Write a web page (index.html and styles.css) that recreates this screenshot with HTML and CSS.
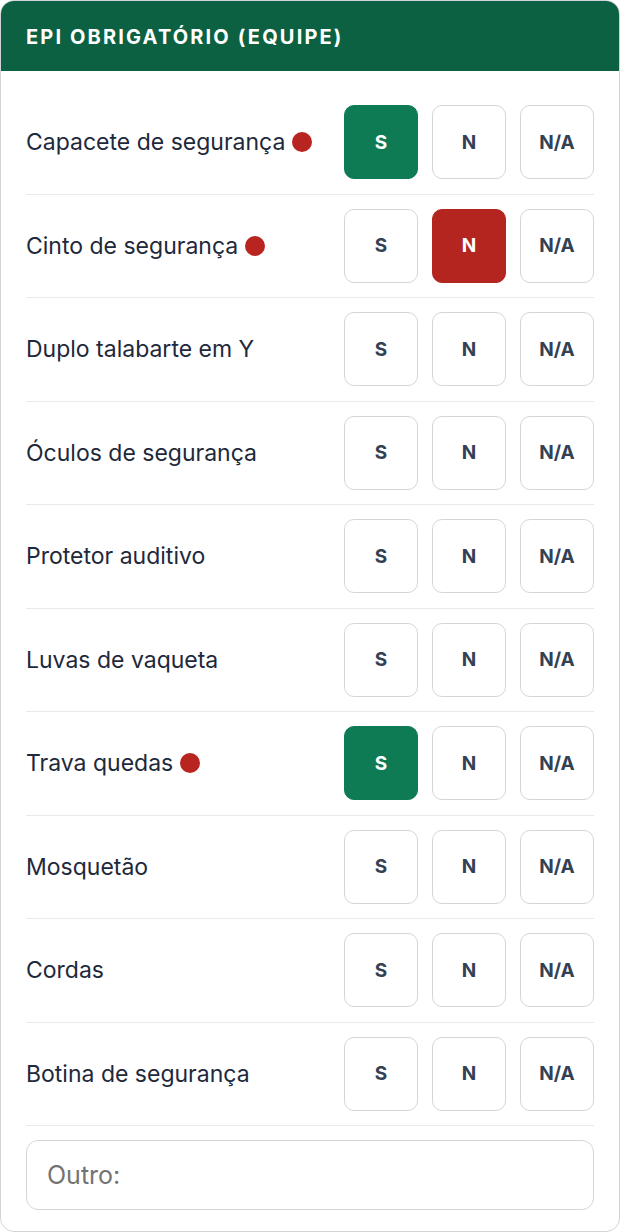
FILE: index.html
```html
<!DOCTYPE html>
<html lang="pt">
<head>
<meta charset="utf-8">
<link rel="stylesheet" href="styles.css">
</head>
<body>
<div class="card">
  <div class="card-header">EPI OBRIGATÓRIO (EQUIPE)</div>
  <div class="card-body">
    <div class="row"><span class="label">Capacete de segurança <span class="dot"></span></span><div class="opts"><button class="opt sel-s">S</button><button class="opt">N</button><button class="opt">N/A</button></div></div>
    <div class="row"><span class="label">Cinto de segurança <span class="dot"></span></span><div class="opts"><button class="opt">S</button><button class="opt sel-n">N</button><button class="opt">N/A</button></div></div>
    <div class="row"><span class="label">Duplo talabarte em Y</span><div class="opts"><button class="opt">S</button><button class="opt">N</button><button class="opt">N/A</button></div></div>
    <div class="row"><span class="label">Óculos de segurança</span><div class="opts"><button class="opt">S</button><button class="opt">N</button><button class="opt">N/A</button></div></div>
    <div class="row"><span class="label">Protetor auditivo</span><div class="opts"><button class="opt">S</button><button class="opt">N</button><button class="opt">N/A</button></div></div>
    <div class="row"><span class="label">Luvas de vaqueta</span><div class="opts"><button class="opt">S</button><button class="opt">N</button><button class="opt">N/A</button></div></div>
    <div class="row"><span class="label">Trava quedas <span class="dot"></span></span><div class="opts"><button class="opt sel-s">S</button><button class="opt">N</button><button class="opt">N/A</button></div></div>
    <div class="row"><span class="label">Mosquetão</span><div class="opts"><button class="opt">S</button><button class="opt">N</button><button class="opt">N/A</button></div></div>
    <div class="row"><span class="label">Cordas</span><div class="opts"><button class="opt">S</button><button class="opt">N</button><button class="opt">N/A</button></div></div>
    <div class="row"><span class="label">Botina de segurança</span><div class="opts"><button class="opt">S</button><button class="opt">N</button><button class="opt">N/A</button></div></div>
    <input class="other" type="text" placeholder="Outro:">
  </div>
</div>
</body>
</html>
```
FILE: styles.css
```css
html, body {
  margin: 0;
  padding: 0;
  background: #ffffff;
}
body {
  font-family: Inter, "Liberation Sans", Arial, sans-serif;
  color: #1e293b;
}
.card {
  box-sizing: border-box;
  width: 620px;
  height: 1232px;
  border: 1.5px solid #cfd4d8;
  border-radius: 14px;
  overflow: hidden;
  background: #fff;
}
.card-header {
  height: 70px;
  background: #0b6142;
  color: #fff;
  font-weight: 700;
  font-size: 20px;
  letter-spacing: 2.15px;
  display: flex;
  align-items: center;
  padding-left: 25px;
  padding-top: 1px;
  box-sizing: border-box;
}
.card-body {
  padding: 20px 25px 0 25px;
}
.row {
  display: flex;
  align-items: center;
  justify-content: space-between;
  padding: 14px 0;
  height: 74.5px;
  border-bottom: 1.5px solid #e8ebee;
}
.label {
  font-size: 23px;
  display: flex;
  align-items: center;
  gap: 7px;
}
.dot {
  display: inline-block;
  width: 20px;
  height: 20px;
  border-radius: 50%;
  background: #b82420;
}
.opts {
  display: flex;
  gap: 14px;
}
.opt {
  box-sizing: border-box;
  width: 74px;
  height: 74px;
  border: 1.5px solid #d3d6d9;
  border-radius: 10px;
  background: #fff;
  color: #334155;
  font-family: Inter, "Liberation Sans", Arial, sans-serif;
  font-weight: 700;
  font-size: 19px;
  padding: 0;
}
.opt.sel-s {
  background: #0f7b55;
  border-color: #0f7b55;
  color: #fff;
}
.opt.sel-n {
  background: #b42520;
  border-color: #b42520;
  color: #fff;
}
.other {
  box-sizing: border-box;
  display: block;
  width: 100%;
  height: 70px;
  margin-top: 14px;
  border: 1.5px solid #d3d6d9;
  border-radius: 12px;
  padding: 0 20px;
  font-family: Inter, "Liberation Sans", Arial, sans-serif;
  font-size: 25px;
  color: #1e293b;
}
.other::placeholder {
  color: #737373;
}
```
